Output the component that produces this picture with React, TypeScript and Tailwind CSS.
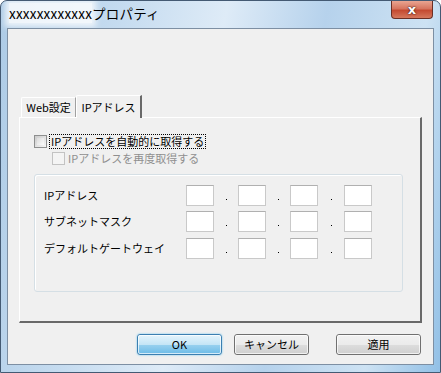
import React from 'react';

const jp = { fontFamily: '"Noto Sans CJK JP", "Noto Sans", sans-serif' };

// Vista-style push button
const Btn: React.FC<{ label: string; primary?: boolean }> = ({ label, primary }) => (
  <div
    className={
      primary
        ? 'h-[21px] rounded-[3px] border border-[#3c7fb1] bg-[linear-gradient(#e5f4fc_0%,#c4e5f6_50%,#98d1ef_51%,#6cbbe7_100%)] shadow-[0_0_2px_#5fc3f0] flex items-center justify-center text-[11px] text-black'
        : 'h-[21px] rounded-[3px] border border-[#707070] bg-[linear-gradient(#f2f2f2_0%,#ebebeb_50%,#dddddd_51%,#cfcfcf_100%)] flex items-center justify-center text-[11px] text-black'
    }
  >
    <div className="w-full h-full rounded-[2px] border border-white/70 flex items-center justify-center leading-none">
      {label}
    </div>
  </div>
);

const IpBox = () => (
  <div className="w-[28px] h-[21px] bg-white border border-[#c9c9c9] border-t-[#b0b0b0]" />
);

const Dot: React.FC<{ w?: string }> = ({ w = 'w-[24px]' }) => (
  <div className={`${w} flex items-end justify-center pb-[6px]`}>
    <div className="w-[1px] h-[1px] bg-black" />
  </div>
);

const IpRow: React.FC<{ label: string }> = ({ label }) => (
  <div className="flex items-center h-[21px]">
    <div className="w-[142px] text-[11px] text-black leading-none">{label}</div>
    <div className="flex">
      <IpBox />
      <Dot />
      <IpBox />
      <Dot />
      <IpBox />
      <Dot w="w-[26px]" />
      <IpBox />
    </div>
  </div>
);

export default function App() {
  return (
    <div
      className="w-[441px] h-[373px] rounded-t-[7px] border border-[#445a73] bg-[linear-gradient(100deg,#adcbe6_0%,#c6dcf0_25%,#deebf7_45%,#b6d2ec_65%,#cde2f3_85%,#92c0e6_100%)] flex flex-col overflow-hidden"
      style={jp}
    >
      {/* Title bar */}
      <div className="h-[27px] flex items-start justify-between pl-[8px] pr-[7px]">
        <div className="mt-[6px] text-[13.5px] leading-none text-black tracking-[0.2px]">
          <span className="bg-white/80 shadow-[0_0_6px_4px_rgba(255,255,255,0.75)]">xxxxxxxxxxxx</span>
          プロパティ
        </div>
        <div className="w-[42px] h-[18px] rounded-b-[4px] border border-t-0 border-[#6b2f25] bg-[linear-gradient(#e9a591_0%,#d6755f_45%,#c44a31_55%,#d6785d_100%)] flex items-center justify-center">
          <span
            className="text-white font-bold text-[13px] leading-none [text-shadow:0_0_2px_#3a1a14,0_0_1px_#3a1a14]"
            style={{ fontFamily: '"DejaVu Sans", sans-serif' }}
          >
            x
          </span>
        </div>
      </div>

      {/* Client area */}
      <div className="flex-1 mx-[6px] mb-[7px] border border-[#7d8fa3] bg-[#f0f0f0] flex flex-col px-[11px] pt-[66px]">
        {/* Tabs */}
        <div className="flex items-end h-[22px] pl-[2px]">
          <div className="h-[20px] w-[55px] border-l border-t border-white border-r border-r-[#a0a0a0] rounded-tl-[2px] flex items-center justify-center text-[11px] leading-none text-black">
            Web設定
          </div>
          <div className="h-[23px] w-[66px] -mb-[1px] border-l border-t border-white border-r-2 border-r-[#696969] bg-[#f0f0f0] rounded-tl-[2px] flex items-center justify-center text-[11px] leading-none text-black relative z-10">
            IPアドレス
          </div>
        </div>

        {/* Tab panel */}
        <div className="h-[206px] border-l border-t border-white border-r-2 border-b-2 border-r-[#696969] border-b-[#696969] pl-[14px] pr-[17px] pt-[16px]">
          <div className="flex items-center h-[14px] gap-[2px]">
            <div className="w-[13px] h-[13px] border border-[#8e8f8f] bg-[linear-gradient(135deg,#cbcbcb,#f6f6f6)] p-[2px]">
              <div className="w-full h-full bg-[linear-gradient(135deg,#dcdcdc,#fbfbfb)]" />
            </div>
            <div className="border border-dotted border-black px-[1px] h-[15px] flex items-center text-[11px] leading-none text-black">
              IPアドレスを自動的に取得する
            </div>
          </div>
          <div className="flex items-center h-[14px] gap-[3px] mt-[3px] ml-[18px]">
            <div className="w-[13px] h-[13px] border border-[#c3c3c3] bg-[#f4f4f4]" />
            <div className="text-[11px] leading-none text-[#8f8f8f]">IPアドレスを再度取得する</div>
          </div>

          {/* Group box */}
          <div className="mt-[9px] h-[118px] rounded-[3px] border border-[#d5dfe5] shadow-[inset_1px_1px_0_#ffffff] pl-[9px] pt-[10px] flex flex-col gap-[5px]">
            <IpRow label="IPアドレス" />
            <IpRow label="サブネットマスク" />
            <div className="mt-[1px]">
              <IpRow label="デフォルトゲートウェイ" />
            </div>
          </div>
        </div>

        {/* Buttons */}
        <div className="flex justify-end mt-[11px] pr-[1px]">
          <div className="w-[85px] mr-[12px]">
            <Btn label="OK" primary />
          </div>
          <div className="w-[75px] mr-[27px]">
            <Btn label="キャンセル" />
          </div>
          <div className="w-[85px]">
            <Btn label="適用" />
          </div>
        </div>
      </div>
    </div>
  );
}
